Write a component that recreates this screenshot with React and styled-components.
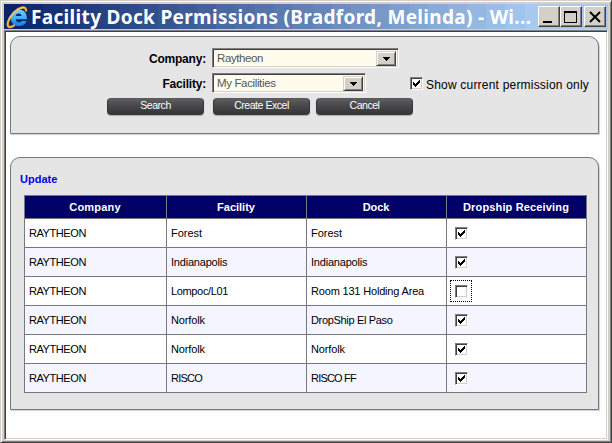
import React, { useState } from "react";
import styled, { createGlobalStyle, css } from "styled-components";

const Global = createGlobalStyle`
  * { box-sizing: border-box; }
  html, body { margin: 0; padding: 0; overflow: hidden; background: #d4d0c8; }
  body { font-family: "Liberation Sans", Arial, sans-serif; color: #000; }
`;

const mix = (t) =>
  `rgb(${[[10, 166], [36, 202], [106, 240]].map(([a, b]) => Math.round(a + (b - a) * t)).join(",")})`;
const BANDS = 28;
const captionGradient = Array.from({ length: BANDS }, (_, i) => {
  const from = (i * 540) / BANDS;
  const to = ((i + 1) * 540) / BANDS;
  const c = mix(i / (BANDS - 1));
  return `${c} ${from.toFixed(1)}px, ${c} ${to.toFixed(1)}px`;
}).join(", ");

const Frame = styled.div`
  width: 612px;
  height: 443px;
  display: flex;
  flex-direction: column;
  background: #d4d0c8;
  border: 1px solid;
  border-color: #d4d0c8 #404040 #404040 #d4d0c8;
  box-shadow: inset 1px 1px #fff, inset -1px -1px #808080;
  padding: 3px 2px 2px 3px;
`;

const Caption = styled.header`
  flex: none;
  display: flex;
  align-items: center;
  width: 604px;
  height: 25px;
  padding: 0 2px 0 2px;
  background: linear-gradient(to right, ${captionGradient});
`;

const Title = styled.h1`
  flex: 1;
  margin: 0 0 0 3px;
  font: bold 19px/24px "Noto Sans", "Open Sans", sans-serif;
  letter-spacing: ${(p) => p.$spacing}px;
  color: #fff;
  white-space: pre;
`;

const bevelOut = css`
  border: 1px solid;
  border-color: #fff #404040 #404040 #fff;
  box-shadow: inset -1px -1px #808080;
  background: #d4d0c8;
`;

const CaptionButton = styled.button`
  ${bevelOut}
  flex: none;
  width: 22px;
  height: 21px;
  padding: 0;
  margin-left: ${(p) => p.$gap || 0}px;
  svg { display: block; }
`;

const Client = styled.main`
  flex: none;
  width: 604px;
  height: 410px;
  margin-top: 1px;
  border: 1px solid;
  border-color: #808080 #fff #fff #808080;
  box-shadow: inset 1px 1px #404040, inset -1px -1px #d4d0c8;
  background: #fff;
  padding: 5px 0 0 5px;
`;

const Panel = styled.section`
  width: 589px;
  height: ${(p) => p.$height}px;
  margin-bottom: 23px;
  border: 1px solid #777783;
  border-radius: 10px 10px 0 0;
  background: #e5e5e5;
  box-shadow: 1px 1px 1px #d0d0d0;
`;

const SearchPanel = styled(Panel)`
  padding: 11px 0 0 0;
`;

const FieldRow = styled.div`
  display: flex;
  height: 19px;
  margin-bottom: 6px;
`;

const FieldLabel = styled.label`
  width: 195px;
  margin-right: 6px;
  text-align: right;
  font: bold 12px/22px "Liberation Sans", Arial, sans-serif;
  letter-spacing: ${(p) => p.$spacing || 0}px;
`;

const Combo = styled.div`
  display: flex;
  width: ${(p) => p.$width}px;
  height: 20px;
  border: 1px solid;
  border-color: #808080 #fff #fff #808080;
  box-shadow: inset 1px 1px #404040, inset -1px -1px #d4d0c8;
  background: #fffcee;
  padding: 2px 2px 2px 4px;
`;

const ComboValue = styled.span`
  flex: 1;
  font-size: 11.5px;
  line-height: 15px;
  letter-spacing: ${(p) => p.$spacing || 0}px;
  color: #555;
`;

const ComboArrow = styled.span`
  border: 1px solid;
  border-color: #d4d0c8 #404040 #404040 #d4d0c8;
  box-shadow: inset 1px 1px #fff, inset -1px -1px #808080;
  background: #d4d0c8;
  width: 20px;
  height: 15px;
  svg { display: block; }
`;

const Option = styled.label`
  display: flex;
  margin: 4px 0 0 44px;
  font-size: 12px;
  line-height: 16px;
  letter-spacing: 0.2px;
  white-space: nowrap;
`;

const OptionText = styled.span`
  margin-left: 3px;
`;

const Actions = styled.div`
  display: flex;
  padding-left: 96px;
`;

const ActionButton = styled.button`
  width: 97px;
  height: 17px;
  margin-right: ${(p) => p.$after || 0}px;
  padding: 0 0 2px;
  border: 1px solid #39393b;
  border-top-color: #59595b;
  border-radius: 4px;
  background: linear-gradient(#5e5e60, #48484a 45%, #363638);
  box-shadow: 0 1px 1px #aaa;
  font: 10.5px/13px "Liberation Sans", Arial, sans-serif;
  letter-spacing: -0.45px;
  color: #fff;
`;

const ResultPanel = styled(Panel)`
  padding: 14px 0 0 13px;
`;

const UpdateLink = styled.a`
  display: block;
  height: 23px;
  margin-left: -4px;
  font: bold 11px/15px "Liberation Sans", Arial, sans-serif;
  letter-spacing: 0;
  color: #0000e8;
`;

const Table = styled.table`
  width: 563px;
  table-layout: fixed;
  border-collapse: collapse;
  font-size: 11px;
`;

const HeadCell = styled.th`
  height: 23px;
  padding: 0 1px 1px 0;
  border: 1px solid #777783;
  background: #000066;
  color: #fff;
  font-size: 11px;
  line-height: 14px;
  letter-spacing: ${(p) => p.$spacing || 0}px;
`;

const Row = styled.tr`
  height: 29px;
  background: #fff;
  &:nth-child(even) { background: #f5f5ff; }
`;

const Cell = styled.td`
  height: 29px;
  padding: 0 0 0 4px;
  border: 1px solid #777783;
  line-height: 14px;
  letter-spacing: ${(p) => p.$spacing || 0}px;
  white-space: nowrap;
`;

const CheckCell = styled(Cell)`
  padding-left: 3px;
`;

const Focus = styled.span`
  display: block;
  width: 22px;
  height: 22px;
  padding: 4px;
  border: 1px dotted ${(p) => (p.$on ? "#000" : "transparent")};
`;

const Box = styled.button`
  display: block;
  flex: none;
  width: 13px;
  height: 13px;
  padding: 1px;
  border: 1px solid;
  border-color: #808080 #fff #fff #808080;
  box-shadow: inset 1px 1px #404040, inset -1px -1px #d4d0c8;
  background: #fff;
  svg { display: block; }
`;

function Check({ initial }) {
  const [on, setOn] = useState(initial);
  return (
    <Box type="button" role="checkbox" aria-checked={on} onClick={() => setOn(!on)}>
      {on && (
        <svg width="9" height="9" viewBox="0 0 9 9" shapeRendering="crispEdges">
          <path d="M1 3h1v1h1v1h1v-1h1v-1h1v-1h1v-1h1v3h-1v1h-1v1h-1v1h-1v1h-1v-1h-1v-1h-1z" />
        </svg>
      )}
    </Box>
  );
}

const BrowserLogo = () => (
  <svg width="22" height="24" viewBox="0 0 22 24">
    <defs>
      <linearGradient id="blue" x1="0" y1="0" x2="0" y2="1">
        <stop offset="0" stopColor="#7ad0ff" />
        <stop offset=".5" stopColor="#3db2fa" />
        <stop offset="1" stopColor="#1778dc" />
      </linearGradient>
    </defs>
    <path
      d="M20.800 14.200H9.800c.1 2 1.400 3.100 3.100 3.100 1.400 0 2.300-.5 2.900-1.300h4.600c-1 3.200-3.900 5.200-7.600 5.200-4.800 0-8-3.300-8-8.100S8 4.500 12.700 4.500s8.100 3.300 8.100 8.300zM9.800 11h5.800c-.2-1.700-1.300-2.500-2.900-2.500s-2.700.8-2.900 2.500z"
      fill="url(#blue)"
    />
    <path
      d="M20 6.500C20.500 3.400 18.800 2 15.600 2.600 10.600 3.800 4.200 10.500 2.200 16.500c-1.200 3.600-.3 5.900 2.200 5.500 1.600-.2 2.900-1.100 4.300-2.200"
      fill="none" stroke="#eeb02e" strokeWidth="2.300"
    />
    <path d="M18 2.600C12.500 2.700 5.200 9.500 2.800 15.500" fill="none" stroke="#ffe071" strokeWidth=".9" />
  </svg>
);

const Arrow = () => (
  <svg width="18" height="13" viewBox="0 0 18 13" shapeRendering="crispEdges">
    <path d="M6 5h7v1h-1v1h-1v1h-1v1h-1v-1h-1v-1h-1v-1h-1z" />
  </svg>
);

const columns = [
  { title: "Company", width: 142, spacing: 0.2 },
  { title: "Facility", width: 140, spacing: 0 },
  { title: "Dock", width: 140, spacing: -0.1 },
  { title: "Dropship Receiving", width: 140, spacing: 0.15 },
];

const rows = [
  ["Forest", "Forest", true],
  ["Indianapolis", "Indianapolis", true],
  ["Lompoc/L01", "Room 131 Holding Area", false],
  ["Norfolk", "DropShip El Paso", true],
  ["Norfolk", "Norfolk", true],
  ["RISCO", "RISCO FF", true],
];

const tracking = {
  Indianapolis: -0.2,
  "Lompoc/L01": -0.35,
  "Room 131 Holding Area": -0.18,
  "DropShip El Paso": -0.33,
  Norfolk: -0.12,
  RISCO: -0.75,
  "RISCO FF": -0.8,
};

export default function App() {
  return (
    <>
      <Global />
      <Frame>
        <Caption>
          <BrowserLogo />
          <Title $spacing={0.32}>Facility Dock Permissions (Bradford, Melinda) - Wi...</Title>
          <CaptionButton aria-label="Minimize">
            <svg width="20" height="19" shapeRendering="crispEdges"><path d="M4 14h9v2H4z" /></svg>
          </CaptionButton>
          <CaptionButton aria-label="Maximize">
            <svg width="20" height="19" shapeRendering="crispEdges">
              <path fillRule="evenodd" d="M3 4h13v12H3zM4 6v9h11V6z" />
            </svg>
          </CaptionButton>
          <CaptionButton aria-label="Close" $gap={2}>
            <svg width="20" height="19"><path d="M5 5l10 10M15 5L5 15" stroke="#000" strokeWidth="2" /></svg>
          </CaptionButton>
        </Caption>
        <Client>
          <SearchPanel $height={98}>
            <FieldRow>
              <FieldLabel $spacing={-0.2}>Company:</FieldLabel>
              <Combo $width={187}>
                <ComboValue $spacing={-0.4}>Raytheon</ComboValue>
                <ComboArrow><Arrow /></ComboArrow>
              </Combo>
            </FieldRow>
            <FieldRow>
              <FieldLabel $spacing={-0.2}>Facility:</FieldLabel>
              <Combo $width={154}>
                <ComboValue $spacing={-0.36}>My Facilities</ComboValue>
                <ComboArrow><Arrow /></ComboArrow>
              </Combo>
              <Option>
                <Check initial />
                <OptionText>Show current permission only</OptionText>
              </Option>
            </FieldRow>
            <Actions>
              <ActionButton $after={9}>Search</ActionButton>
              <ActionButton $after={6}>Create Excel</ActionButton>
              <ActionButton>Cancel</ActionButton>
            </Actions>
          </SearchPanel>
          <ResultPanel $height={253}>
            <UpdateLink>Update</UpdateLink>
            <Table>
              <colgroup>
                {columns.map((c) => <col key={c.title} width={c.width} />)}
              </colgroup>
              <thead>
                <tr>
                  {columns.map((c) => <HeadCell key={c.title} $spacing={c.spacing}>{c.title}</HeadCell>)}
                </tr>
              </thead>
              <tbody>
                {rows.map(([facility, dock, on], i) => (
                  <Row key={i}>
                    <Cell $spacing={-0.42}>RAYTHEON</Cell>
                    <Cell $spacing={tracking[facility]}>{facility}</Cell>
                    <Cell $spacing={tracking[dock]}>{dock}</Cell>
                    <CheckCell>
                      <Focus $on={i === 2}><Check initial={on} /></Focus>
                    </CheckCell>
                  </Row>
                ))}
              </tbody>
            </Table>
          </ResultPanel>
        </Client>
      </Frame>
    </>
  );
}
